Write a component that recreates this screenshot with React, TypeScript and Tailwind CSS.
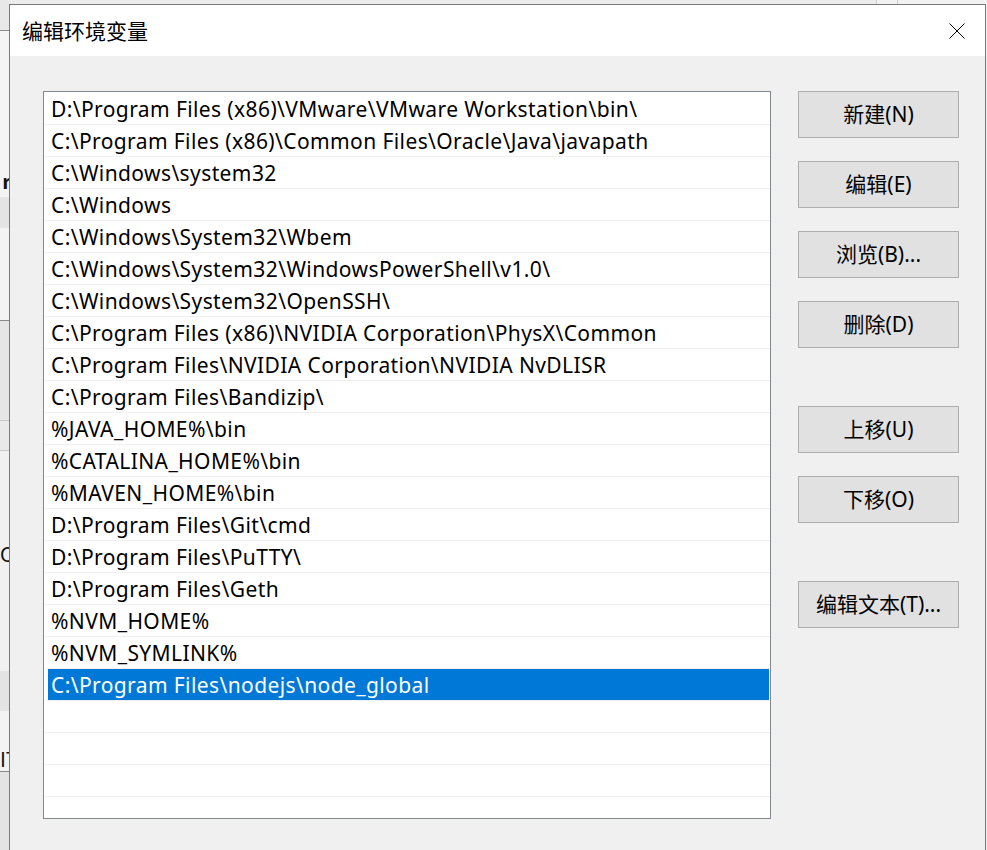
import React from "react";

const paths = [
  "D:\\Program Files (x86)\\VMware\\VMware Workstation\\bin\\",
  "C:\\Program Files (x86)\\Common Files\\Oracle\\Java\\javapath",
  "C:\\Windows\\system32",
  "C:\\Windows",
  "C:\\Windows\\System32\\Wbem",
  "C:\\Windows\\System32\\WindowsPowerShell\\v1.0\\",
  "C:\\Windows\\System32\\OpenSSH\\",
  "C:\\Program Files (x86)\\NVIDIA Corporation\\PhysX\\Common",
  "C:\\Program Files\\NVIDIA Corporation\\NVIDIA NvDLISR",
  "C:\\Program Files\\Bandizip\\",
  "%JAVA_HOME%\\bin",
  "%CATALINA_HOME%\\bin",
  "%MAVEN_HOME%\\bin",
  "D:\\Program Files\\Git\\cmd",
  "D:\\Program Files\\PuTTY\\",
  "D:\\Program Files\\Geth",
  "%NVM_HOME%",
  "%NVM_SYMLINK%",
  "C:\\Program Files\\nodejs\\node_global",
  "",
  "",
  "",
  "",
];

const selected = 18;

function Btn({ label, className = "" }: { label: string; className?: string }) {
  return (
    <button className={"w-[161px] h-[47px] shrink-0 bg-[#e1e1e1] border border-[#adadad] text-[21px] text-black flex items-center justify-center font-['Noto_Sans','Noto_Sans_CJK_SC',sans-serif] " + className}>
      {label}
    </button>
  );
}

export default function App() {
  return (
    <div className="relative w-[987px] h-[850px] overflow-hidden bg-[#f0f0f0] font-['Noto_Sans_CJK_SC','Noto_Sans',sans-serif]">
      {/* window behind the dialog */}
      <div className="flex h-full">
        <div className="w-[9px] flex flex-col text-[20px] font-bold text-[#111] overflow-hidden">
          <div className="h-[31px] bg-[#e8e8e8] border-b border-[#8a8a8a] shrink-0" />
          <div className="h-[166px] bg-[#f4f4f4] shrink-0 flex items-end justify-end leading-none pb-[6px]">
            <span className="-mr-[2px]">r</span>
          </div>
          <div className="h-[31px] bg-[#e4e4e4] shrink-0" />
          <div className="h-[93px] bg-[#f3f3f3] border-b border-[#8a8a8a] shrink-0" />
          <div className="h-[100px] bg-[#e6e6e6] border-b border-[#c9c9c9] shrink-0" />
          <div className="h-[30px] bg-[#e9e9e9] border-b border-[#c9c9c9] shrink-0" />
          <div className="h-[220px] bg-[#f1f1f1] shrink-0 flex items-center justify-start font-normal leading-none pb-[14px]">
            <span className="whitespace-nowrap tracking-[-4px]">CE</span>
          </div>
          <div className="h-[40px] bg-[#e3e3e3] shrink-0" />
          <div className="h-[61px] bg-[#f3f3f3] border-b border-[#8a8a8a] shrink-0 flex items-center font-normal leading-none pt-[36px]">
            <span className="whitespace-nowrap">IT</span>
          </div>
          <div className="flex-1 bg-[#e3e3e3]" />
        </div>
        <div className="flex-1 flex flex-col">
          <div className="h-[4px] flex">
            <div className="w-[867px] bg-[#ececec]" />
            <div className="w-[22px] border-l border-r border-[#cfcfcf] bg-[#f2f2f2]" />
            <div className="flex-1 bg-[#f2f2f2]" />
          </div>
        </div>
      </div>

      {/* dialog */}
      <div className="absolute left-[9px] top-[4px] w-[977px] h-[900px] border border-[#7a7a7a] bg-[#f0f0f0] flex flex-col">
        <div className="h-[51px] bg-white flex items-center justify-between shrink-0">
          <span className="ml-[12px] text-[21px] text-black leading-none">编辑环境变量</span>
          <svg width="16" height="16" viewBox="0 0 16 16" className="mr-[20px]">
            <path d="M0.5 0.5 L15.5 15.5 M15.5 0.5 L0.5 15.5" stroke="#000" strokeWidth="1" />
          </svg>
        </div>
        <div className="flex pl-[33px] pt-[35px] gap-[27px]">
          <div className="w-[728px] h-[728px] border border-[#828790] bg-white pt-[1px] shrink-0 overflow-hidden font-['Noto_Sans','Noto_Sans_CJK_SC',sans-serif]">
            {paths.map((p, i) => (
              <div key={i} className="h-[32px] border-b border-[#f0f0f0] pl-[4px] pr-[1px]">
                <div
                  className={
                    "h-[31px] flex items-center pl-[3px] pt-[1px] text-[21px] tracking-[0.4px] leading-none whitespace-nowrap " +
                    (i === selected ? "bg-[#0078d7] text-white" : "text-black")
                  }
                >
                  {p}
                </div>
              </div>
            ))}
          </div>
          <div className="flex flex-col">
            <Btn label="新建(N)" />
            <Btn label="编辑(E)" className="mt-[23px]" />
            <Btn label="浏览(B)..." className="mt-[23px]" />
            <Btn label="删除(D)" className="mt-[23px]" />
            <Btn label="上移(U)" className="mt-[58px]" />
            <Btn label="下移(O)" className="mt-[23px]" />
            <Btn label="编辑文本(T)..." className="mt-[58px]" />
          </div>
        </div>
      </div>
    </div>
  );
}
